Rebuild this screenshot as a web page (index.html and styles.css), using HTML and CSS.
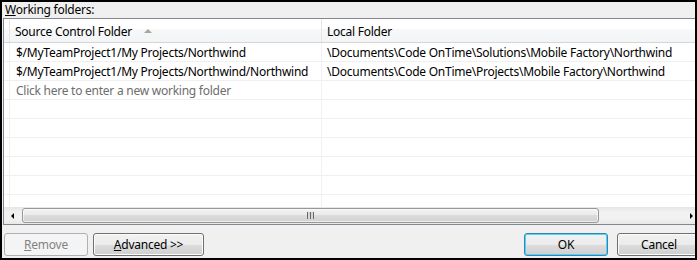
FILE: index.html
```html
<!DOCTYPE html>
<html lang="en">
<head>
    <meta charset="UTF-8">
    <title>Working folders</title>
    <link rel="stylesheet" href="styles.css">
</head>
<body>
    <div class="dialog">
        <div class="label"><u>W</u>orking folders:</div>

        <div class="list">
            <div class="header">
                <div class="cell gutter"></div>
                <div class="cell source">Source Control Folder <span class="sort-arrow"></span></div>
                <div class="cell local">Local Folder</div>
            </div>
            <div class="rows">
                <div class="row">
                    <div class="cell gutter"></div>
                    <div class="cell source">$/MyTeamProject1/My Projects/Northwind</div>
                    <div class="cell local">\Documents\Code OnTime\Solutions\Mobile Factory\Northwind</div>
                </div>
                <div class="row">
                    <div class="cell gutter"></div>
                    <div class="cell source">$/MyTeamProject1/My Projects/Northwind/Northwind</div>
                    <div class="cell local">\Documents\Code OnTime\Projects\Mobile Factory\Northwind</div>
                </div>
                <div class="row">
                    <div class="cell gutter"></div>
                    <div class="cell source hint">Click here to enter a new working folder</div>
                    <div class="cell local"></div>
                </div>
                <div class="row"><div class="cell gutter"></div><div class="cell source"></div><div class="cell local"></div></div>
                <div class="row"><div class="cell gutter"></div><div class="cell source"></div><div class="cell local"></div></div>
                <div class="row"><div class="cell gutter"></div><div class="cell source"></div><div class="cell local"></div></div>
                <div class="row"><div class="cell gutter"></div><div class="cell source"></div><div class="cell local"></div></div>
                <div class="row"><div class="cell gutter"></div><div class="cell source"></div><div class="cell local"></div></div>
                <div class="row filler"><div class="cell gutter"></div><div class="cell source"></div><div class="cell local"></div></div>
            </div>
            <div class="hscroll">
                <div class="arrow left"></div>
                <div class="track">
                    <div class="thumb"><span class="grip"></span></div>
                </div>
                <div class="arrow right"></div>
            </div>
        </div>

        <div class="buttons">
            <div class="group">
                <button class="btn" disabled><u>R</u>emove</button>
                <button class="btn wide"><u>A</u>dvanced &gt;&gt;</button>
            </div>
            <div class="group right">
                <button class="btn default">OK</button>
                <button class="btn">Cancel</button>
            </div>
        </div>
    </div>
</body>
</html>
```

FILE: styles.css
```css
* {
    margin: 0;
    padding: 0;
    box-sizing: border-box;
}

body {
    font-family: "Noto Sans", "Open Sans", sans-serif;
    font-size: 12px;
    letter-spacing: -0.25px;
    background: #f0f0f0;
}

.dialog {
    width: 697px;
    height: 260px;
    border: 2px solid #000;
    background: #f0f0f0;
    overflow: hidden;
    display: flex;
    flex-direction: column;
}

.label {
    height: 16px;
    line-height: 16px;
    padding-left: 3px;
    color: #000;
}

/* List view */
.list {
    margin-left: 1px;
    width: 698px;
    height: 207px;
    border: 1px solid #828790;
    background: #fff;
    display: flex;
    flex-direction: column;
}

.header,
.row {
    display: flex;
}

.header {
    height: 24px;
    line-height: 25px;
    border-bottom: 1px solid #d5d5d5;
    background: linear-gradient(#ffffff 0%, #ffffff 45%, #f7f8f9 45%, #f3f4f6 100%);
}

.row {
    height: 19px;
    line-height: 20px;
    border-bottom: 1px solid #f0f0f0;
    color: #000;
}

.rows {
    flex: 1;
    display: flex;
    flex-direction: column;
}

.row.filler {
    flex: 1;
    border-bottom: none;
}

.cell {
    white-space: nowrap;
    overflow: hidden;
}

.gutter {
    width: 6px;
    border-right: 1px solid #f0f0f0;
}

.source {
    width: 312px;
    padding-left: 6px;
    border-right: 1px solid #f0f0f0;
}

.local {
    flex: 1;
    padding-left: 5px;
}

.header .gutter,
.header .source {
    border-right-color: #e5e5e5;
}

.header .source {
    padding-left: 5px;
}

.sort-arrow {
    display: inline-block;
    width: 0;
    height: 0;
    margin-left: 9px;
    vertical-align: 3px;
    border-left: 4px solid transparent;
    border-right: 4px solid transparent;
    border-bottom: 4px solid #a5a89c;
}

.hint {
    color: #6d6d6d;
}

/* Horizontal scrollbar */
.hscroll {
    height: 17px;
    display: flex;
    background: linear-gradient(to bottom, #e6e6e6, #f1f1f1 30%, #f1f1f1 70%, #e8e8e8);
}

.arrow {
    width: 17px;
    display: flex;
    align-items: center;
    justify-content: center;
}

.arrow::before {
    content: "";
    border-top: 3px solid transparent;
    border-bottom: 3px solid transparent;
}

.arrow.left::before {
    border-right: 3px solid #000;
}

.arrow.right::before {
    border-left: 3px solid #000;
}

.track {
    flex: 1;
    padding: 1px 0 0 1px;
}

.thumb {
    width: 577px;
    height: 15px;
    border: 1px solid #979797;
    border-radius: 3px;
    background: linear-gradient(to bottom, #f2f2f2 0%, #ebebeb 50%, #dcdcdc 50%, #d1d1d1 100%);
    box-shadow: inset 0 0 0 1px rgba(255,255,255,0.6);
    display: flex;
    align-items: center;
    justify-content: center;
}

.grip {
    width: 7px;
    height: 7px;
    background: repeating-linear-gradient(to right, #6a6a6a 0, #6a6a6a 1px, #d6d6d6 1px, #d6d6d6 3px);
}

/* Buttons */
.buttons {
    flex: 1;
    display: flex;
    justify-content: space-between;
    align-items: flex-start;
    padding: 8px 0 0 2px;
    margin-right: -6px;
}

.group {
    display: flex;
    gap: 5px;
}

.group.right {
    gap: 9px;
}

.btn {
    width: 84px;
    height: 23px;
    font-family: inherit;
    font-size: 12px;
    letter-spacing: inherit;
    color: #000;
    border: 1px solid #707070;
    border-radius: 3px;
    background: linear-gradient(to bottom, #f2f2f2 0%, #ebebeb 50%, #dddddd 50%, #cfcfcf 100%);
    box-shadow: inset 0 0 0 1px #fcfcfc;
}

.btn.wide {
    width: 111px;
}

.btn.default {
    border-color: #3c7fb1;
    box-shadow: inset 0 0 0 1px #48d7fb;
}

.btn:disabled {
    color: #838383;
    border-color: #adb2b5;
    background: #f4f4f4;
    box-shadow: none;
}
```
